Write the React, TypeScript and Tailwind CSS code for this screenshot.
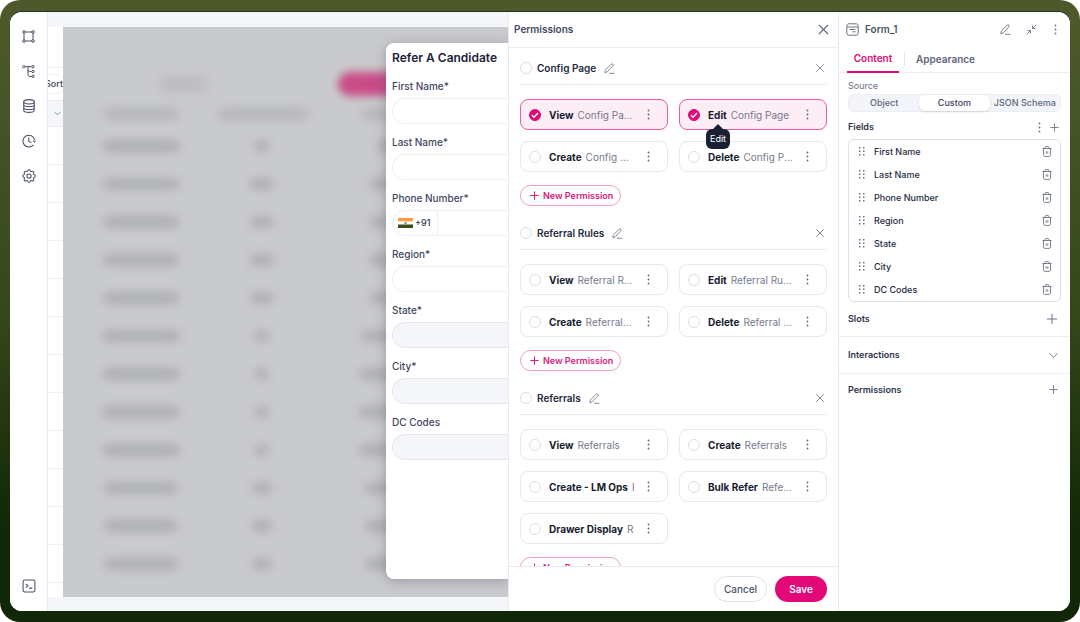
import React from 'react';
import { X, Plus, ChevronDown } from 'lucide-react';

interface Permission {
  action: string;
  target: string;
  checked?: boolean;
  tooltip?: string;
}

interface PermissionGroup {
  name: string;
  items: Permission[];
}

const GROUPS: PermissionGroup[] = [
  {
    name: 'Config Page',
    items: [
      { action: 'View', target: 'Config Page', checked: true },
      { action: 'Edit', target: 'Config Page', checked: true, tooltip: 'Edit' },
      { action: 'Create', target: 'Config Page' },
      { action: 'Delete', target: 'Config Page' },
    ],
  },
  {
    name: 'Referral Rules',
    items: [
      { action: 'View', target: 'Referral Rules' },
      { action: 'Edit', target: 'Referral Rules' },
      { action: 'Create', target: 'Referral Rules' },
      { action: 'Delete', target: 'Referral Rules' },
    ],
  },
  {
    name: 'Referrals',
    items: [
      { action: 'View', target: 'Referrals' },
      { action: 'Create', target: 'Referrals' },
      { action: 'Create - LM Ops', target: 'Referrals' },
      { action: 'Bulk Refer', target: 'Referrals' },
      { action: 'Drawer Display', target: 'Referrals' },
    ],
  },
];

const FORM_FIELDS = [
  { id: 'first', label: 'First Name*' },
  { id: 'last', label: 'Last Name*' },
  { id: 'phone', label: 'Phone Number*', phone: true },
  { id: 'region', label: 'Region*' },
  { id: 'state', label: 'State*', disabled: true },
  { id: 'city', label: 'City*', disabled: true },
  { id: 'dc', label: 'DC Codes', disabled: true },
];

const FIELDS = ['First Name', 'Last Name', 'Phone Number', 'Region', 'State', 'City', 'DC Codes'];

// widths of the blurred cells, one entry per table row
const ROWS = [
  [78, 16, 32],
  [76, 24, 40],
  [76, 24, 40],
  [76, 24, 40],
  [76, 24, 40],
  [78, 14, 48],
  [78, 14, 50],
  [78, 14, 50],
  [78, 14, 50],
  [74, 20, 44],
  [74, 20, 44],
  [74, 20, 44],
];

function FrameIcon() {
  return (
    <svg className="size-[13px]" viewBox="0 0 13 13" fill="none" stroke="currentColor">
      <path d="M3 2h7M3 11h7M2 3v7M11 3v7" />
      <circle cx="2" cy="2" r="1.3" fill="#fff" />
      <circle cx="11" cy="2" r="1.3" fill="#fff" />
      <circle cx="2" cy="11" r="1.3" fill="#fff" />
      <circle cx="11" cy="11" r="1.3" fill="#fff" />
    </svg>
  );
}

function TreeIcon() {
  return (
    <svg className="size-[13px]" viewBox="0 0 13 13" fill="none" stroke="currentColor">
      <path d="M2.5 1.6h7M6 1.6v7.9a2 2 0 0 0 2 2h1.5M6 5a1.5 1.5 0 0 0 1.5 1.5h2" />
      <circle cx="1.7" cy="1.7" r="1.2" fill="#fff" />
      <circle cx="11" cy="1.7" r="1.2" fill="#fff" />
      <circle cx="11" cy="6.5" r="1.2" fill="#fff" />
      <circle cx="11" cy="11.3" r="1.2" fill="#fff" />
    </svg>
  );
}

function DatabaseIcon() {
  return (
    <svg className="size-[14px]" viewBox="0 0 13 13" fill="none" stroke="currentColor">
      <ellipse cx="6.5" cy="2.6" rx="4.9" ry="2" />
      <path d="M1.6 2.6v7.8c0 1.1 2.2 2 4.9 2s4.9-.9 4.9-2V2.6M1.6 5.2c0 1.1 2.2 2 4.9 2s4.9-.9 4.9-2M1.6 7.8c0 1.1 2.2 2 4.9 2s4.9-.9 4.9-2" />
    </svg>
  );
}

function HistoryIcon() {
  return (
    <svg className="size-[14px]" viewBox="0 0 13 13" fill="none" stroke="currentColor" strokeLinecap="round">
      <path d="M10.4 10.4A5.5 5.5 0 1 1 11.7 5.2" />
      <path d="M6.3 3.6v3l2 1.2" />
      <path d="M10 6.2h3l-1.5 2z" fill="currentColor" stroke="none" />
    </svg>
  );
}

function GearIcon() {
  return (
    <svg className="size-[14px]" viewBox="2 2 20 20" fill="none" stroke="currentColor" strokeWidth="1.5" strokeLinejoin="round">
      <path d="M10.3 4.3c.4-1.8 3-1.8 3.4 0a1.7 1.7 0 0 0 2.6 1.1c1.5-.9 3.3.8 2.4 2.4a1.7 1.7 0 0 0 1 2.5c1.8.4 1.8 3 0 3.4a1.7 1.7 0 0 0-1 2.6c.9 1.5-.8 3.3-2.4 2.4a1.7 1.7 0 0 0-2.6 1c-.4 1.8-3 1.8-3.4 0a1.7 1.7 0 0 0-2.6-1c-1.5.9-3.3-.8-2.4-2.4a1.7 1.7 0 0 0-1-2.6c-1.8-.4-1.8-3 0-3.4a1.7 1.7 0 0 0 1-2.5c-.9-1.6.8-3.3 2.4-2.4a1.7 1.7 0 0 0 2.6-1.1z" />
      <circle cx="12" cy="12" r="3" />
    </svg>
  );
}

function TerminalIcon() {
  return (
    <svg className="size-[14px]" viewBox="0 0 13 13" fill="none" stroke="currentColor">
      <rect x="1" y="1" width="11" height="11" rx="1.5" />
      <path d="M3.5 4.5l2 1.8-2 1.8M6.5 8.5h3" />
    </svg>
  );
}

function PencilIcon() {
  return (
    <svg className="size-[11px]" viewBox="0 0 11 11" fill="none" stroke="currentColor" strokeWidth="0.9" strokeLinejoin="round">
      <path d="M.8 9.7l.5-2.6L7.1 1.2c.5-.5 1.2-.5 1.7-.1.5.5.5 1.2.1 1.7L3.2 8.9z" />
      <path d="M5 10.3h5.5" />
    </svg>
  );
}

function ShrinkIcon() {
  return (
    <svg className="size-[11px]" viewBox="0 0 11 11" fill="none" stroke="currentColor" strokeWidth="0.9">
      <path d="M10.2.8L6.7 4.3M6.5 1.5v3h3M.8 10.2l3.5-3.5M4.5 9.5v-3h-3" />
    </svg>
  );
}

function DotsIcon() {
  return (
    <svg className="h-[11px] w-[3px]" viewBox="0 0 3 11" fill="currentColor">
      <circle cx="1.5" cy="1.5" r="0.9" />
      <circle cx="1.5" cy="5.5" r="0.9" />
      <circle cx="1.5" cy="9.5" r="0.9" />
    </svg>
  );
}

function GripIcon() {
  return (
    <svg className="h-[9px] w-[6px]" viewBox="0 0 6 9" fill="currentColor">
      <path d="M0 0h1.5v1.5H0zM4 0h1.5v1.5H4zM0 3.5h1.5V5H0zM4 3.5h1.5V5H4zM0 7h1.5v1.5H0zM4 7h1.5v1.5H4z" />
    </svg>
  );
}

function TrashIcon() {
  return (
    <svg className="h-[11px] w-[10px]" viewBox="0 0 10 11" fill="none" stroke="currentColor" strokeWidth="0.9">
      <path d="M.5 2.5h9M3 2.5V1.5c0-.5.4-.9.9-.9h2.2c.5 0 .9.4.9.9v1M1.5 2.5v6.4c0 .8.6 1.5 1.4 1.5h4.2c.8 0 1.4-.7 1.4-1.5V2.5M4.2 5.3v2.4M5.8 5.3v2.4" />
    </svg>
  );
}

function FormIcon() {
  return (
    <svg className="size-[13px]" viewBox="0 0 13 13" fill="none" stroke="currentColor">
      <rect x="0.8" y="0.8" width="11.4" height="11.4" rx="2" />
      <path d="M1 4h11M3.5 6.5h6M6.5 8.8h3" />
    </svg>
  );
}

function IndiaFlag() {
  return (
    <svg className="h-[10px] w-[15px]" viewBox="0 0 15 10">
      <path fill="#ff9b3b" d="M0 0h15v3.500H0z" />
      <path fill="#fff" d="M0 3.500h15v3H0z" />
      <path fill="#3d4f16" d="M0 6.500h15V10H0z" />
      <circle cx="7.5" cy="5" r="1.3" fill="#8d8f9d" />
    </svg>
  );
}

function RoundCheck({ label, checked }: { label: string; checked?: boolean }) {
  return (
    <span className="grid size-3 shrink-0 place-items-center">
      <input
        type="checkbox"
        aria-label={label}
        defaultChecked={checked}
        className="peer col-start-1 row-start-1 size-3 appearance-none rounded-full border border-[#dcdee8] bg-white checked:border-[#e30877] checked:bg-[#e30877]"
      />
      <svg
        className="pointer-events-none col-start-1 row-start-1 hidden size-2 peer-checked:block"
        viewBox="0 0 8 8"
        fill="none"
        stroke="#fff"
        strokeWidth="1.5"
      >
        <path d="M1 4.2l2 2 4-4.2" />
      </svg>
    </span>
  );
}

function Sidebar() {
  const icons = [
    { name: 'Canvas', icon: <FrameIcon /> },
    { name: 'Workflows', icon: <TreeIcon /> },
    { name: 'Data', icon: <DatabaseIcon /> },
    { name: 'History', icon: <HistoryIcon /> },
    { name: 'Settings', icon: <GearIcon /> },
  ];
  return (
    <nav className="flex w-[38px] shrink-0 flex-col items-center justify-between border-r border-[#e8e9f0] bg-white pt-[17px] pb-[18px] text-[#4b536b]">
      <div className="flex flex-col gap-[21px]">
        {icons.map((i) => (
          <button key={i.name} aria-label={i.name} className="grid size-[14px] place-items-center">
            {i.icon}
          </button>
        ))}
      </div>
      <button aria-label="Console" className="grid size-[14px] place-items-center">
        <TerminalIcon />
      </button>
    </nav>
  );
}

// slice of the page that stays visible beside the dimmed area
function PageEdge() {
  return (
    <div className="flex w-[15px] shrink-0 flex-col overflow-hidden bg-white">
      <div className="h-[41px] shrink-0 border-b border-[#edeef4]" />
      <div className="flex h-8 shrink-0 items-center">
        <button className="flex h-5 w-[15px] items-center justify-end rounded-r-md border-y border-[#f0f1f6] text-[9px] font-medium text-[#3c445c]">
          Sort
        </button>
      </div>
      <div className="flex h-[27px] shrink-0 items-center justify-end border-y border-[#e8e9f1] bg-[#f5f6fa] text-[#7b8193]">
        <ChevronDown size={11} strokeWidth={1.8} />
      </div>
      {ROWS.map((_, i) => (
        <div key={i} className="h-[38px] shrink-0 border-b border-[#eeeff5]" />
      ))}
    </div>
  );
}

function DimmedTable() {
  return (
    <div className="flex h-full flex-col">
      <div className="flex h-[73px] shrink-0 items-end justify-between pb-1">
        <div className="mb-1.5 ml-24 h-3 w-12 rounded-full bg-[#adaeb4] opacity-60 blur-[6px]" />
        <div className="mr-[68px] h-6 w-[102px] rounded-full bg-[#c93e7f] opacity-90 blur-[4px]" />
      </div>
      <div className="flex h-[27px] shrink-0 items-center">
        <div className="flex w-[156px] shrink-0 justify-center">
          <div className="h-3 w-[76px] rounded-full bg-[#a9aab0] opacity-60 blur-[5px]" />
        </div>
        <div className="flex w-[88px] shrink-0 justify-center">
          <div className="h-3 w-[90px] shrink-0 rounded-full bg-[#a9aab0] opacity-60 blur-[5px]" />
        </div>
        <div className="flex w-[142px] shrink-0 justify-center">
          <div className="h-3 w-8 rounded-full bg-[#a9aab0] opacity-60 blur-[5px]" />
        </div>
      </div>
      {ROWS.map(([a, b, c], i) => (
        <div key={i} className="flex h-[38px] shrink-0 items-center">
          <div className="flex w-[156px] shrink-0 justify-center">
            <div className="h-3 rounded-full bg-[#9d9ea5] opacity-60 blur-[5px]" style={{ width: a }} />
          </div>
          <div className="flex w-[86px] shrink-0 justify-center">
            <div className="h-3 rounded-full bg-[#9d9ea5] opacity-60 blur-[5px]" style={{ width: b }} />
          </div>
          <div className="flex w-[104px] shrink-0 justify-end">
            <div className="h-3 rounded-full bg-[#9d9ea5] opacity-60 blur-[5px]" style={{ width: c }} />
          </div>
        </div>
      ))}
    </div>
  );
}

function ReferForm() {
  return (
    <form className="absolute top-4 right-0 bottom-[18px] flex w-[122px] flex-col overflow-hidden rounded-l-lg bg-white pl-1.5 shadow-[0_2px_12px_rgba(60,66,90,0.35)]">
      <h2 className="mt-[5px] mb-2.5 h-5 text-xs leading-5 font-semibold whitespace-nowrap text-[#1d2339]">
        Refer A Candidate
      </h2>
      <div className="flex flex-col gap-2.5">
        {FORM_FIELDS.map((f) => (
          <div key={f.id} className="flex flex-col gap-1">
            <label htmlFor={f.id} className="text-[10px] leading-4 font-medium whitespace-nowrap text-[#3f475f]">
              {f.label}
            </label>
            <div className="flex h-[26px]">
              {f.phone && (
                <button
                  type="button"
                  className="flex w-[46px] shrink-0 items-center gap-0.5 rounded-l-full border border-[#eeeff6] pl-[5px] text-[9px] font-medium text-[#2f374e]"
                >
                  <IndiaFlag />
                  +91
                </button>
              )}
              <input
                id={f.id}
                disabled={f.disabled}
                className={
                  f.phone
                    ? 'min-w-0 flex-1 border-y border-[#eeeff6]'
                    : 'min-w-0 flex-1 rounded-l-full border border-r-0 border-[#eeeff6] disabled:border-[#e4e6f0] disabled:bg-[#f5f6fa]'
                }
              />
            </div>
          </div>
        ))}
      </div>
    </form>
  );
}

function Canvas() {
  return (
    <main className="flex min-w-0 flex-1 flex-col bg-[#f5f6fa] pt-[15px] pb-3.5">
      <div className="flex min-h-0 flex-1">
        <PageEdge />
        <div className="relative min-w-0 flex-1 overflow-hidden bg-[#c9cacc]">
          <DimmedTable />
          <ReferForm />
        </div>
      </div>
    </main>
  );
}

function PermissionCard({ item }: { item: Permission }) {
  return (
    <div
      className={
        item.checked
          ? 'relative flex h-[31px] items-center rounded-lg border border-[#ea5aa2] bg-[#fdeef6] pr-3.5 pl-2'
          : 'relative flex h-[31px] items-center rounded-lg border border-[#e6e7ef] bg-white pr-3.5 pl-2'
      }
    >
      <label className="flex min-w-0 flex-1 items-center gap-2">
        <RoundCheck label={`${item.action} ${item.target}`} checked={item.checked} />
        <span className="flex min-w-0 flex-1 gap-1 overflow-hidden text-[10px] leading-4 whitespace-nowrap">
          <span className="shrink-0 font-bold text-[#161c2e]">{item.action}</span>
          <span className="truncate text-[#747a8b]">{item.target}</span>
        </span>
      </label>
      <button aria-label="More" className="ml-[9px] grid h-4 w-2.5 shrink-0 place-items-center text-[#5d657b]">
        <DotsIcon />
      </button>
      {item.tooltip && (
        <div
          role="tooltip"
          className="absolute top-6 left-[26px] z-10 flex w-6 flex-col items-center"
        >
          <div className="h-[5px] w-2.5 bg-[#1a2034] [clip-path:polygon(50%_0,100%_100%,0_100%)]" />
          <div className="flex h-5 w-full items-center justify-center rounded-md bg-[#1a2034] text-[9px] text-white">
            {item.tooltip}
          </div>
        </div>
      )}
    </div>
  );
}

function PermissionsPanel() {
  return (
    <section className="flex w-[330px] shrink-0 flex-col border-l border-[#e8e9f1] bg-white">
      <header className="flex h-9 shrink-0 items-center justify-between border-b border-[#edeef5] pr-1.5 pl-[5px]">
        <h2 className="text-[10px] font-semibold text-[#3f475f]">Permissions</h2>
        <button aria-label="Close" className="text-[#5d657b]">
          <X size={17} strokeWidth={1.5} />
        </button>
      </header>
      <div className="flex min-h-0 flex-1 flex-col gap-[11px] overflow-hidden px-[11px] pt-1">
        {GROUPS.map((group) => (
          <div key={group.name} className="flex shrink-0 flex-col">
            <div className="flex h-[33px] items-center border-b border-[#e9eaf0]">
              <RoundCheck label={group.name} />
              <h3 className="ml-[5px] text-[10px] font-semibold text-[#222a40]">{group.name}</h3>
              <button aria-label="Rename" className="ml-2 text-[#7a8090]">
                <PencilIcon />
              </button>
              <button aria-label="Remove" className="ml-auto text-[#7a8090]">
                <X size={14} strokeWidth={1.6} />
              </button>
            </div>
            <div className="mt-3.5 grid grid-cols-2 gap-[11px]">
              {group.items.map((item) => (
                <PermissionCard key={item.action} item={item} />
              ))}
            </div>
            <button className="mt-[13px] flex h-[21px] items-center gap-0.5 self-start rounded-full border border-[#f29ac4] px-[7px] text-[9px] font-semibold text-[#d9207c]">
              <Plus size={13} strokeWidth={2} />
              New Permission
            </button>
          </div>
        ))}
      </div>
      <footer className="flex shrink-0 justify-end gap-2 border-t border-[#e6e7ef] px-[11px] py-[9px]">
        <button className="h-[26px] w-[53px] rounded-full border border-[#e0e2ea] text-[10px] font-medium text-[#4b5368]">
          Cancel
        </button>
        <button className="h-[26px] w-[52px] rounded-full bg-[#e30877] text-[10px] font-semibold text-white">
          Save
        </button>
      </footer>
    </section>
  );
}

function Inspector() {
  return (
    <aside className="flex w-[232px] shrink-0 flex-col border-l border-[#e8e9f1] bg-white">
      <header className="flex h-[34px] shrink-0 items-center pr-[11px] pl-[7px] text-[#6c7386]">
        <FormIcon />
        <h2 className="ml-1.5 text-[10px] font-semibold text-[#4b5368]">Form_1</h2>
        <div className="ml-auto flex items-center gap-[15px]">
          <button aria-label="Rename">
            <PencilIcon />
          </button>
          <button aria-label="Collapse">
            <ShrinkIcon />
          </button>
          <button aria-label="More" className="px-0.5">
            <DotsIcon />
          </button>
        </div>
      </header>
      <div role="tablist" className="flex h-[27px] shrink-0 border-b border-[#edeef4] pl-2 text-[10px] font-semibold">
        <button role="tab" aria-selected="true" className="-mb-px h-[27px] w-[52px] border-b-2 border-[#e30877] text-[#e30877]">
          Content
        </button>
        <div className="ml-[5px] h-3.5 w-px self-center bg-[#e4e6ee]" />
        <button role="tab" aria-selected="false" className="ml-[11px] text-[#5d657b]">
          Appearance
        </button>
      </div>
      <div className="flex shrink-0 flex-col px-[9px] pt-[5px]">
        <span id="source" className="text-[9px] leading-4 text-[#6c7386]">
          Source
        </span>
        <div
          role="group"
          aria-labelledby="source"
          className="grid h-[18px] grid-cols-3 rounded-md border border-[#edeef4] bg-[#f4f5fa] text-[9px] font-medium text-[#5d657b]"
        >
          <button>Object</button>
          <button className="rounded-md bg-white text-[#3c445c] shadow-sm">Custom</button>
          <button className="whitespace-nowrap">JSON Schema</button>
        </div>
        <div className="flex h-[27px] items-center pt-[3px] text-[#6c7386]">
          <h3 className="mr-auto text-[9px] font-semibold text-[#2b334a]">Fields</h3>
          <button aria-label="Field options" className="mr-[7px]">
            <DotsIcon />
          </button>
          <button aria-label="Add field">
            <Plus size={13} strokeWidth={1.6} />
          </button>
        </div>
        <ul className="rounded-md border border-[#dddfe9]">
          {FIELDS.map((name) => (
            <li key={name} className="flex h-[23px] items-center pr-2 pl-2.5 text-[#6c7386]">
              <GripIcon />
              <span className="ml-[9px] text-[9px] font-medium text-[#242b41]">{name}</span>
              <button aria-label={`Delete ${name}`} className="ml-auto">
                <TrashIcon />
              </button>
            </li>
          ))}
        </ul>
      </div>
      <div className="flex h-[35px] shrink-0 items-center justify-between border-b border-[#edeef4] pr-2.5 pl-[9px] text-[#6c7386]">
        <h3 className="text-[9px] font-semibold text-[#2b334a]">Slots</h3>
        <button aria-label="Add slot">
          <Plus size={16} strokeWidth={1.5} />
        </button>
      </div>
      <div className="flex h-[37px] shrink-0 items-center justify-between border-b border-[#edeef4] px-[9px] text-[#6c7386]">
        <h3 className="text-[9px] font-semibold text-[#2b334a]">Interactions</h3>
        <button aria-label="Expand interactions">
          <ChevronDown size={15} strokeWidth={1.5} />
        </button>
      </div>
      <div className="flex h-[31px] shrink-0 items-center justify-between pr-2.5 pl-[9px] text-[#6c7386]">
        <h3 className="text-[9px] font-semibold text-[#2b334a]">Permissions</h3>
        <button aria-label="Add permission">
          <Plus size={13} strokeWidth={1.6} />
        </button>
      </div>
    </aside>
  );
}

export default function App() {
  return (
    <div className="flex h-screen rounded-[20px] bg-linear-to-b from-[#4d592b] from-5% via-[#35481b] via-50% to-[#112707] to-85% px-2.5 pt-3 pb-[11px] font-['Inter',sans-serif]">
      <div className="flex min-w-0 flex-1 overflow-hidden rounded-xl bg-white shadow-[0_-1px_0_#26312c]">
        <Sidebar />
        <Canvas />
        <PermissionsPanel />
        <Inspector />
      </div>
    </div>
  );
}
